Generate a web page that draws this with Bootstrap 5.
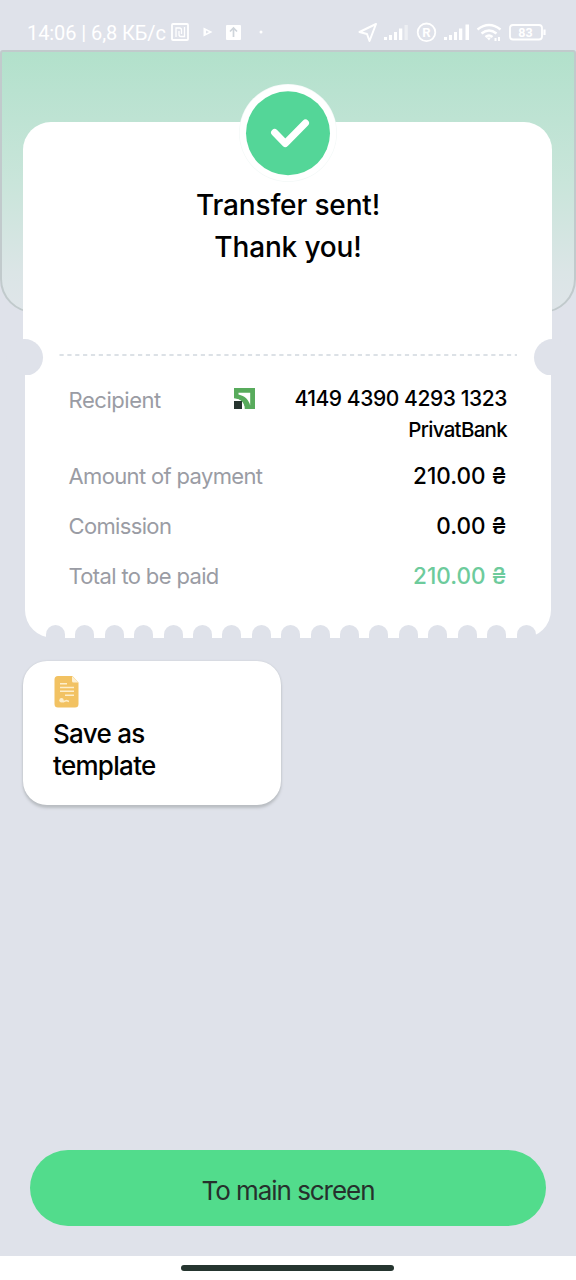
<!DOCTYPE html>
<html lang="en">
<head>
<meta charset="utf-8">
<meta name="viewport" content="width=device-width, initial-scale=1">
<title>Transfer sent</title>
<link href="https://cdn.jsdelivr.net/npm/bootstrap@5.3.0/dist/css/bootstrap.min.css" rel="stylesheet">
<style>
  :root { --page: #dfe2ea; --green: #54d698; }
  body { background: var(--page); color: #000; font-family: Inter, "Liberation Sans", sans-serif; font-weight: 450; }
  .screen { width: 576px; height: 1280px; }
  .status { height: 50px; padding: 15px 29px 0 27px; color: #fff; font: 400 20px/36px Roboto, sans-serif; }
  .status svg { display: block; flex: none; }
  .stat-time { letter-spacing: -.08px; }
  .hero-wash { top: 50px; left: 0; right: 0; height: 263px; border: 2px solid #c1cacc; border-radius: 3px 3px 34px 34px;
    background: linear-gradient(#b2e1cb 0, #b9e2d0 15%, #c9e5da 50%, #dbe5e6 85%, #dfe5e9 100%); }
  .ticket { margin: 72px 24px 0 23px; }
  .ticket-head { height: 217px; background: #fff; border-radius: 28px 28px 0 0; padding: 62px 0 0 1px; }
  .ticket-head h1 { font-size: 28px; line-height: 42px; font-weight: 450; letter-spacing: -.15px; }
  .seal { width: 98px; height: 98px; left: 216px; top: -38px; }
  .tear { height: 36px; background: #fff; }
  .notch { width: 37px; height: 37px; border-radius: 50%; background: var(--page); top: 0; }
  .notch-l { left: -17px; } .notch-r { right: -19px; }
  .ticket-body { height: 263px; margin: 0 1.5px; padding: 9px 44px 0; background: #fff; border-radius: 0 0 28px 28px; font-size: 22.5px; line-height: 50px; }
  .term { color: #9a9ca4; font-size: 22px; font-weight: 400; letter-spacing: -.65px; }
  .recipient { height: 67px; }
  .recipient .term { line-height: 32px; letter-spacing: -.45px; }
  .bank-logo { margin: 4px 38px 0 auto; }
  .payee { font-size: 21px; line-height: 30.5px; letter-spacing: -.42px; margin-right: -.5px; }
  .bank-name { font-size: 20.5px; letter-spacing: -.7px; }
  .total { color: #6dcb9c; font-weight: 500; }
  .teeth { left: 21.5px; width: 489.5px; bottom: 0; height: 13px; }
  .tooth { width: 19px; height: 13px; background: var(--page); border-radius: 9.5px 9.5px 0 0; }
  .tile { width: 258px; height: 144px; margin: 23px 0 0 23px; padding: 15px 30px; border: 0; border-radius: 24px; box-shadow: 0 3px 3px #b9bdc2, 0 0 2px #c4c8ce; font-size: 26px; line-height: 32px; letter-spacing: -.7px; }
  .tile svg { margin-bottom: 10px; }
  .main-btn { margin: 0 30px 30px; height: 76px; background: #52dc8c; color: #26302c; border: 0; font-size: 26px; font-weight: 400; letter-spacing: -1.05px; padding: 4px 0 0; }
  .gesture { height: 24px; background: #fff; padding: 9px 1px 0 0; }
  .gesture div { width: 213px; height: 6px; background: #25352f; }
</style>
</head>
<body>
<div class="screen position-relative d-flex flex-column overflow-hidden">
  <div class="hero-wash position-absolute"></div>

  <header class="status d-flex position-relative">
    <span class="stat-time text-nowrap">14:06 | 6,8 КБ/с</span>
    <svg class="ms-auto" width="376" height="36" viewBox="171 15 376 36" fill="none" stroke="#fff" stroke-width="1.8">
      <rect x="172" y="24" width="16" height="16" rx="1"/>
      <path d="M176 37V28h3.500q2 0 2 2v4M184.500 27v9.500h-3.500q-2 0-2-2v-3.500" stroke-width="1.300"/>
      <path d="M203.500 27.500v9l9-4.500z" fill="#fff" stroke="none"/>
      <path d="M206 30.500v3l3-1.500z" fill="#dfe2ea" stroke="none"/>
      <rect x="226" y="25" width="15" height="15" rx="1" fill="#fff" stroke="none"/>
      <path d="M233.500 37v-9M230 31.500l3.500-3.500 3.500 3.500" stroke="#cfd5db" stroke-width="1.700"/>
      <circle cx="261" cy="32" r="1.500" fill="#fff" stroke="none"/>
      <path d="M376 24l-16.500 8 7.500 2 2.500 7z" stroke-width="2" stroke-linejoin="round"/>
      <g fill="#fff" stroke="none">
        <path d="M384 37h3v3h-3zM389 35h3v5h-3zM394 32h3v8h-3zM399 28.500h3.300v11.500h-3.300z"/>
        <path d="M404.500 25h3.300v15h-3.300z" opacity=".45"/>
        <path d="M444 37h3v3h-3zM449 35h3v5h-3zM454 32h3v8h-3zM459 28.500h3.300v11.500h-3.300zM465.500 24.500h3.500v15.500h-3.500z"/>
      </g>
      <circle cx="426.500" cy="32.300" r="8.800"/>
      <text x="426.500" y="37.200" text-anchor="middle" fill="#fff" stroke="none" font-family="Roboto" font-weight="700" font-size="13">R</text>
      <path d="M477.500 29.500q11.500-9 23 0M481.500 33.500q7.500-6 15 0M485.500 37q3.500-3 7 0" stroke-width="2.400"/>
      <path d="M486.500 37.500l2.500 3 2-3zM494.500 38h2v3h-2zM498 37h2v4h-2z" fill="#fff" stroke="none"/>
      <rect x="510" y="25" width="32" height="14.500" rx="3"/>
      <path d="M544.500 29.500v5.500" stroke-width="2.200"/>
      <text x="525.500" y="37" text-anchor="middle" fill="#fff" stroke="none" font-family="Roboto" font-weight="700" font-size="12.500">83</text>
    </svg>
  </header>

  <main class="ticket position-relative">
    <svg class="seal position-absolute" viewBox="0 0 98 98">
      <circle cx="49" cy="49" r="49" fill="#f4f9f8"/>
      <circle cx="49" cy="49" r="48.300" fill="#fff"/>
      <circle cx="49" cy="49.300" r="42" fill="#54d698"/>
      <path d="M35.600 48.500L46.300 59.500 66.500 39" fill="none" stroke="#fff" stroke-width="7" stroke-linecap="round" stroke-linejoin="round"/>
    </svg>
    <section class="ticket-head text-center">
      <h1 class="mb-0">Transfer sent!<br>Thank you!</h1>
    </section>
    <div class="tear position-relative">
      <span class="notch notch-l position-absolute"></span>
      <span class="notch notch-r position-absolute"></span>
      <svg class="d-block" width="529" height="36"><path d="M36.500 16H494" stroke="#dce1e6" stroke-width="2" stroke-dasharray="4.200 3.650"/></svg>
    </div>
    <section class="ticket-body position-relative">
      <div class="recipient d-flex">
        <span class="term">Recipient</span>
        <svg class="bank-logo" width="22" height="22" viewBox="0 0 22 22">
          <path d="M0 0h21v21H10.500v-2.500C9.500 14 6.500 11.500 0 10.500z" fill="#58ab5c"/>
          <path d="M4.500 4.800H16.200V17.500C14.500 11.500 11 8 4.500 6.500z" fill="#fff"/>
          <path d="M0 10.500C7 11 10 14 10.500 21H0z" fill="#fff"/>
          <path d="M0 13h8v8H0z" fill="#26352f"/>
        </svg>
        <span class="payee text-end">4149 4390 4293 1323<br><span class="bank-name">PrivatBank</span></span>
      </div>
      <div class="d-flex justify-content-between"><span class="term">Amount of payment</span><span>210.00 ₴</span></div>
      <div class="d-flex justify-content-between"><span class="term">Comission</span><span>0.00 ₴</span></div>
      <div class="d-flex justify-content-between"><span class="term">Total to be paid</span><span class="total">210.00 ₴</span></div>
      <div class="teeth position-absolute d-flex justify-content-between">
        <i class="tooth"></i><i class="tooth"></i><i class="tooth"></i><i class="tooth"></i><i class="tooth"></i><i class="tooth"></i><i class="tooth"></i><i class="tooth"></i><i class="tooth"></i><i class="tooth"></i><i class="tooth"></i><i class="tooth"></i><i class="tooth"></i><i class="tooth"></i><i class="tooth"></i><i class="tooth"></i><i class="tooth"></i>
      </div>
    </section>
  </main>

  <a class="tile card text-reset text-decoration-none">
    <svg width="27" height="32" viewBox="0 0 27 32" class="d-block">
      <path d="M5 0H19.500l6 6.500V28a3.500 3.500 0 0 1-3.500 3.500H5A3.500 3.500 0 0 1 1.500 28V3.500A3.500 3.500 0 0 1 5 0z" fill="#f2c262"/>
      <path d="M19 0l6.500 6.500h-5a1.500 1.500 0 0 1-1.500-1.500z" fill="#fdf0d2"/>
      <path d="M7 7.800h7M7 11.500h14M7 15.300h14M12 19.200h9M9.500 26l4-1.500 2.500 1" stroke="#fdeecb" stroke-width="1.400" fill="none"/>
      <circle cx="8.500" cy="24.300" r="2.200" fill="#fdeecb"/>
    </svg>
    <span>Save as<br>template</span>
  </a>

  <button class="main-btn btn rounded-pill mt-auto">To main screen</button>
  <footer class="gesture"><div class="mx-auto rounded-pill"></div></footer>
</div>
<script src="https://cdn.jsdelivr.net/npm/bootstrap@5.3.0/dist/js/bootstrap.bundle.min.js"></script>
</body>
</html>
